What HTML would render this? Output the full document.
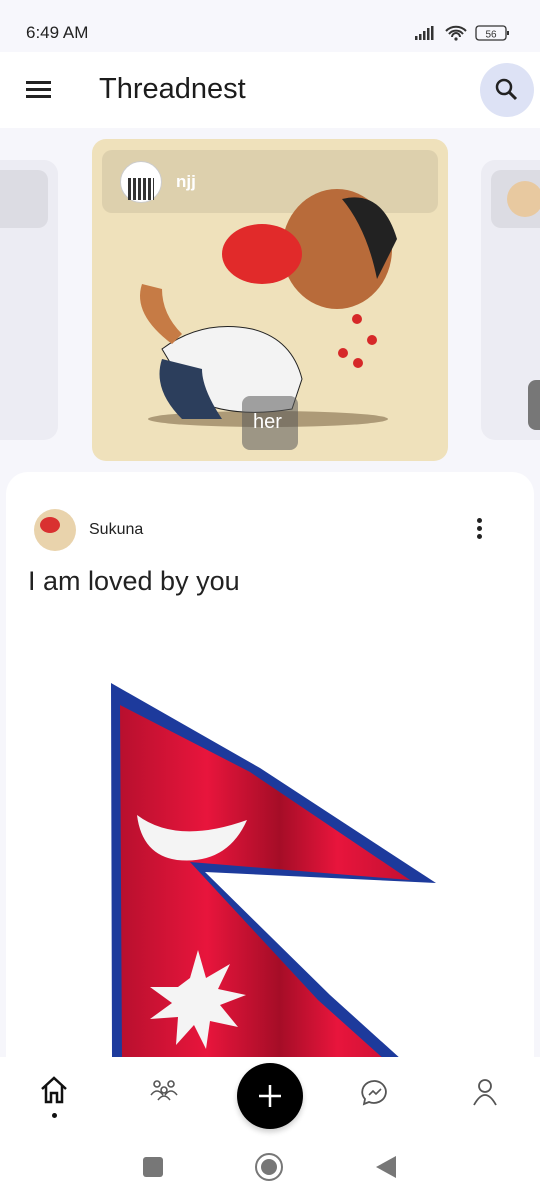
<!DOCTYPE html>
<html><head><meta charset="utf-8"><style>
*{margin:0;padding:0;box-sizing:border-box}
body{width:540px;height:1200px;overflow:hidden;background:#f6f6fb;font-family:"Liberation Sans",sans-serif;position:relative}
.abs{position:absolute}
</style></head><body>
<div class="abs" style="left:0;top:0;width:540px;height:52px;background:#f7f7fc"></div>
<div class="abs" style="left:26px;top:23px;font-size:17px;color:#222">6:49 AM</div>
<svg class="abs" style="left:412px;top:24px" width="100" height="20">
<rect x="3" y="12" width="2.5" height="4" fill="#333"/><rect x="7" y="10" width="2.5" height="6" fill="#333"/><rect x="11" y="7" width="2.5" height="9" fill="#333"/><rect x="15" y="4" width="2.5" height="12" fill="#333"/><rect x="19" y="2" width="2.5" height="14" fill="#333"/>
<path d="M34 7a14 14 0 0 1 20 0M37 10a9 9 0 0 1 14 0M40 13a4 4 0 0 1 8 0" stroke="#333" stroke-width="2" fill="none"/><circle cx="44" cy="15" r="1.6" fill="#333"/>
<rect x="64" y="2" width="30" height="14" rx="3" fill="none" stroke="#333" stroke-width="1.3"/><rect x="95" y="7" width="2" height="4" fill="#333"/>
<text x="79" y="13.5" font-size="10" text-anchor="middle" fill="#333" font-family="Liberation Sans">56</text></svg>
<div class="abs" style="left:0;top:52px;width:540px;height:76px;background:#fff"></div>
<div class="abs" style="left:26px;top:81px;width:25px;height:2.5px;background:#222;box-shadow:0 7px 0 #222,0 14px 0 #222"></div>
<div class="abs" style="left:99px;top:73px;font-size:29px;color:#1c1c1c">Threadnest</div>
<div class="abs" style="left:480px;top:63px;width:54px;height:54px;border-radius:50%;background:#dde2f5"></div>
<svg class="abs" style="left:494px;top:77px" width="26" height="26"><circle cx="10" cy="10" r="7" stroke="#222" stroke-width="2.5" fill="none"/><path d="M15 15l7 7" stroke="#222" stroke-width="3"/></svg>

<div class="abs" style="left:-20px;top:160px;width:78px;height:280px;border-radius:14px;background:#ececf3"></div>
<div class="abs" style="left:-10px;top:170px;width:58px;height:58px;border-radius:10px;background:#dcdce3"></div>
<div class="abs" style="left:481px;top:160px;width:80px;height:280px;border-radius:14px;background:#ececf3"></div>
<div class="abs" style="left:491px;top:170px;width:60px;height:58px;border-radius:10px;background:#dcdce3"></div>
<div class="abs" style="left:507px;top:181px;width:36px;height:36px;border-radius:50%;background:#e8c9a0"></div>
<div class="abs" style="left:528px;top:380px;width:20px;height:50px;border-radius:8px;background:#777"></div>

<div class="abs" style="left:92px;top:139px;width:356px;height:322px;border-radius:14px;background:#efe1bb"></div>
<div class="abs" style="left:102px;top:150px;width:336px;height:63px;border-radius:10px;background:#ddd0ad"></div>
<div class="abs" style="left:120px;top:161px;width:42px;height:42px;border-radius:50%;background:#fff;border:1px solid #ccc"></div>
<div class="abs" style="left:128px;top:178px;width:26px;height:22px;background:repeating-linear-gradient(90deg,#333 0 3px,#fff 3px 5px)"></div>
<div class="abs" style="left:176px;top:172px;font-size:17px;color:#fff;font-weight:bold">njj</div>
<!-- cartoon approx -->
<svg class="abs" style="left:92px;top:139px" width="356" height="322">
<ellipse cx="176" cy="280" rx="120" ry="8" fill="#6b5434" opacity=".5"/>
<path d="M70 210 q40 -30 90 -20 q40 10 50 50 l-10 30 q-60 10 -100 -10 z" fill="#f3f3f3" stroke="#222"/>
<path d="M70 220 q-10 30 20 60 l40 0 q-20 -30 -20 -50z" fill="#2c3e5c"/>
<path d="M50 145 q-10 30 30 60 l10 -10 q-20 -20 -20 -45z" fill="#c67b45"/>
<ellipse cx="245" cy="110" rx="55" ry="60" fill="#b86b3a"/>
<path d="M250 60 q40 -10 55 40 l-20 40 q-10 -50 -35 -80z" fill="#222"/>
<ellipse cx="170" cy="115" rx="40" ry="30" fill="#e12a2a"/>
<circle cx="265" cy="180" r="5" fill="#d62828"/><circle cx="280" cy="201" r="5" fill="#d62828"/><circle cx="251" cy="214" r="5" fill="#d62828"/><circle cx="266" cy="224" r="5" fill="#d62828"/>
</svg>
<div class="abs" style="left:242px;top:396px;width:56px;height:54px;border-radius:8px;background:rgba(90,90,90,.55)"></div>
<div class="abs" style="left:253px;top:411px;font-size:20px;color:#fff">her</div>

<div class="abs" style="left:6px;top:472px;width:528px;height:620px;border-radius:22px;background:#fff"></div>
<div class="abs" style="left:34px;top:509px;width:42px;height:42px;border-radius:50%;background:#e9d3ac;overflow:hidden"><div style="margin:8px 0 0 6px;width:20px;height:16px;border-radius:50%;background:#d93030"></div></div>
<div class="abs" style="left:89px;top:521px;font-size:16px;color:#222">Sukuna</div>
<div class="abs" style="left:477px;top:518px;width:5px;height:5px;border-radius:50%;background:#222;box-shadow:0 8px 0 #222,0 16px 0 #222"></div>
<div class="abs" style="left:28px;top:566px;font-size:27px;color:#222">I am loved by you</div>

<svg class="abs" style="left:0;top:600px" width="540" height="460">
<defs><linearGradient id="g" x1="0" x2="1"><stop offset="0" stop-color="#b8102e"/><stop offset=".3" stop-color="#e8153c"/><stop offset=".55" stop-color="#a50d27"/><stop offset=".75" stop-color="#e8153c"/><stop offset="1" stop-color="#c41032"/></linearGradient></defs>
<path d="M111 83 L112 460 L402 460 L330 395 L205 272 L436 283 L260 168 Z" fill="#1d3a9c"/>
<path d="M120 105 L122 460 L385 460 L318 400 L190 262 L410 280 L250 172 Z" fill="url(#g)"/>
<path d="M137 215 q40 30 110 5 q-20 45 -70 40 q-35 -5 -40 -45z" fill="#f4f4f4"/>
<path d="M190 378 l8 -28 l8 28 l24 -14 l-12 25 l28 6 l-26 10 l18 22 l-28 -6 l-4 28 l-12 -24 l-18 20 l2 -28 l-28 2 l22 -16 l-22 -16 l28 0 z" fill="#f4f4f4"/>
</svg>

<div class="abs" style="left:0;top:1057px;width:540px;height:143px;background:#fff"></div>
<svg class="abs" style="left:38px;top:1075px" width="36" height="30"><path d="M4 14 L16 3 L28 14 M8 11 V27 H13 V18 H19 V27 H24 V11" stroke="#111" stroke-width="2.5" fill="none"/></svg>
<div class="abs" style="left:52px;top:1113px;width:5px;height:5px;border-radius:50%;background:#111"></div>
<svg class="abs" style="left:148px;top:1078px" width="34" height="26" fill="none" stroke="#555" stroke-width="1.6"><circle cx="9" cy="6" r="3"/><circle cx="23" cy="6" r="3"/><circle cx="16" cy="12" r="3"/><path d="M3 17q6-8 12 0M17 17q6-8 12 0M10 22q6-8 12 0"/></svg>
<div class="abs" style="left:237px;top:1063px;width:66px;height:66px;border-radius:50%;background:#000;box-shadow:0 3px 6px rgba(0,0,0,.2)"></div>
<svg class="abs" style="left:257px;top:1083px" width="26" height="26"><path d="M13 2v22M2 13h22" stroke="#fff" stroke-width="2.5"/></svg>
<svg class="abs" style="left:360px;top:1078px" width="30" height="30" fill="none" stroke="#555" stroke-width="1.8"><path d="M15 3a12 11 0 1 1 -6 21l-5 2 1-5a12 11 0 0 1 10-18z"/><path d="M9 17l4-4 3 3 5-5" stroke-width="1.6"/></svg>
<svg class="abs" style="left:471px;top:1077px" width="28" height="30" fill="none" stroke="#555" stroke-width="1.8"><circle cx="14" cy="9" r="6"/><path d="M3 28q11-20 22 0"/></svg>
<div class="abs" style="left:143px;top:1157px;width:20px;height:20px;border-radius:3px;background:#777"></div>
<div class="abs" style="left:255px;top:1153px;width:28px;height:28px;border-radius:50%;border:2.5px solid #777"></div>
<div class="abs" style="left:261px;top:1159px;width:16px;height:16px;border-radius:50%;background:#777"></div>
<svg class="abs" style="left:374px;top:1155px" width="24" height="24"><path d="M22 1V23L2 12Z" fill="#777"/></svg>
</body></html>
